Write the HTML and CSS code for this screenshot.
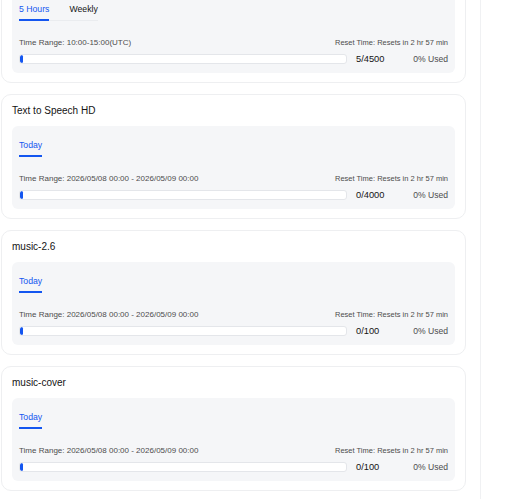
FILE: index.html
```html
<!DOCTYPE html>
<html lang="en">
<head>
    <meta charset="UTF-8">
    <meta name="viewport" content="width=device-width, initial-scale=1.0">
    <title>Usage Quota</title>
    <link rel="stylesheet" href="styles.css">
</head>
<body>
    <div class="layout">
        <main class="main">
            <section class="quota-card">
                <h2 class="quota-title">Text Generation</h2>
                <div class="quota-panel">
                    <div class="tabs">
                        <span class="tab active">5 Hours</span>
                        <span class="tab">Weekly</span>
                    </div>
                    <div class="quota-info">
                        <span class="range">Time Range: 10:00-15:00(UTC)</span>
                        <span class="reset">Reset Time: Resets in 2 hr 57 min</span>
                    </div>
                    <div class="quota-usage">
                        <div class="bar"><div class="bar-fill" style="width: 0.11%"></div></div>
                        <span class="count">5/4500</span>
                        <span class="percent">0% Used</span>
                    </div>
                </div>
            </section>

            <section class="quota-card">
                <h2 class="quota-title">Text to Speech HD</h2>
                <div class="quota-panel">
                    <div class="tabs">
                        <span class="tab active">Today</span>
                    </div>
                    <div class="quota-info">
                        <span class="range">Time Range: 2026/05/08 00:00 - 2026/05/09 00:00</span>
                        <span class="reset">Reset Time: Resets in 2 hr 57 min</span>
                    </div>
                    <div class="quota-usage">
                        <div class="bar"><div class="bar-fill" style="width: 0%"></div></div>
                        <span class="count">0/4000</span>
                        <span class="percent">0% Used</span>
                    </div>
                </div>
            </section>

            <section class="quota-card">
                <h2 class="quota-title">music-2.6</h2>
                <div class="quota-panel">
                    <div class="tabs">
                        <span class="tab active">Today</span>
                    </div>
                    <div class="quota-info">
                        <span class="range">Time Range: 2026/05/08 00:00 - 2026/05/09 00:00</span>
                        <span class="reset">Reset Time: Resets in 2 hr 57 min</span>
                    </div>
                    <div class="quota-usage">
                        <div class="bar"><div class="bar-fill" style="width: 0%"></div></div>
                        <span class="count">0/100</span>
                        <span class="percent">0% Used</span>
                    </div>
                </div>
            </section>

            <section class="quota-card">
                <h2 class="quota-title">music-cover</h2>
                <div class="quota-panel">
                    <div class="tabs">
                        <span class="tab active">Today</span>
                    </div>
                    <div class="quota-info">
                        <span class="range">Time Range: 2026/05/08 00:00 - 2026/05/09 00:00</span>
                        <span class="reset">Reset Time: Resets in 2 hr 57 min</span>
                    </div>
                    <div class="quota-usage">
                        <div class="bar"><div class="bar-fill" style="width: 0%"></div></div>
                        <span class="count">0/100</span>
                        <span class="percent">0% Used</span>
                    </div>
                </div>
            </section>
        </main>
        <aside class="side"></aside>
    </div>
</body>
</html>
```

FILE: styles.css
```css
body {
    margin: 0;
    font-family: "Liberation Sans", Arial, sans-serif;
    background-color: #fff;
    color: #1a1a1a;
    overflow: hidden;
}
.layout {
    display: flex;
    min-height: 100vh;
}
/* list is scrolled a little, first card starts above the fold */
.main {
    width: 465px;
    padding: 0 14px 0 1px;
    margin-top: -42px;
    border-right: 1px solid #f0f1f3;
    display: flex;
    flex-direction: column;
    gap: 11px;
}
.side {
    flex: 1;
}
.quota-card {
    border: 1px solid #eeeff1;
    border-radius: 10px;
    padding: 9px 10px;
}
.quota-title {
    margin: 0 0 8px;
    font-size: 10px;
    line-height: 14px;
    font-weight: normal;
    color: #141414;
}
.quota-panel {
    background-color: #f5f6f8;
    border-radius: 6px;
    padding: 13px 7px 8px;
}
.tabs {
    display: flex;
    gap: 20px;
    width: fit-content;
    border-bottom: 1px solid #eaecef;
}
.tab {
    font-size: 8.7px;
    line-height: 12px;
    padding-bottom: 4px;
    margin-bottom: -1px;
    border-bottom: 2px solid transparent;
    color: #141414;
}
.tab.active {
    color: #1456f0;
    border-bottom-color: #1456f0;
}
.quota-info {
    margin-top: 16px;
    display: flex;
    justify-content: space-between;
    align-items: center;
    height: 10px;
    color: #4d4d4d;
}
.range {
    font-size: 8px;
}
.reset {
    font-size: 7.5px;
}
.quota-usage {
    margin-top: 6px;
    display: flex;
    align-items: center;
    height: 12px;
}
.bar {
    flex: 1;
    height: 10px;
    box-sizing: border-box;
    background-color: #fff;
    border: 1px solid #e4e6ea;
    border-radius: 3px;
    margin-right: 9px;
    overflow: hidden;
}
.bar-fill {
    height: 100%;
    min-width: 3px;
    background-color: #1456f0;
    border-radius: 2px;
}
.count {
    width: 50px;
    font-size: 9.3px;
    color: #141414;
}
.percent {
    width: 42px;
    text-align: right;
    font-size: 8.6px;
    color: #4d4d4d;
}
```
